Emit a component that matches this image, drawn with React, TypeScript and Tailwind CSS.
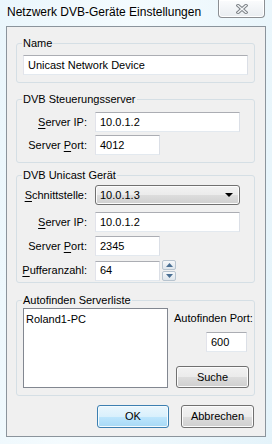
const font = "font-['Liberation_Sans',Arial,sans-serif] text-[11px] text-black";

const textbox =
  "h-[20px] border border-[#abadb3] border-b-[#e3e9ef] border-l-[#e2e3ea] border-r-[#dbdfe6] bg-white pl-[4px] flex items-center leading-none";

const gloss =
  "rounded-[3px] border border-[#707070] bg-[linear-gradient(#f2f2f2_0%,#ebebeb_50%,#dddddd_50%,#cfcfcf_100%)] shadow-[inset_0_0_0_1px_#fcfcfc]";

function Label({ pre, u, post }: { pre: string; u: string; post: string }) {
  return (
    <span className="w-[70px] shrink-0 text-right">
      {pre}
      <span className="underline underline-offset-2">{u}</span>
      {post}
    </span>
  );
}

function Row({
  pre,
  u,
  post,
  value,
  wide,
  spin,
}: {
  pre: string;
  u: string;
  post: string;
  value: string;
  wide?: boolean;
  spin?: boolean;
}) {
  return (
    <div className="flex items-center gap-[8px]">
      <Label pre={pre} u={u} post={post} />
      <div className={wide ? textbox + " w-[145px]" : textbox + " w-[65px]"}>{value}</div>
      {spin && (
        <div className="-ml-[6px] flex flex-col gap-[1px]">
          <div className="flex h-[10px] w-[14px] items-center justify-center rounded-[2px] border border-[#b8c4cf] bg-[linear-gradient(#f6f8fa,#dfe6ec)]">
            <svg width="7" height="4" viewBox="0 0 7 4">
              <path d="M0 4 L3.5 0 L7 4 Z" fill="#4a6f93" />
            </svg>
          </div>
          <div className="flex h-[10px] w-[14px] items-center justify-center rounded-[2px] border border-[#b8c4cf] bg-[linear-gradient(#f6f8fa,#dfe6ec)]">
            <svg width="7" height="4" viewBox="0 0 7 4">
              <path d="M0 0 L3.5 4 L7 0 Z" fill="#4a6f93" />
            </svg>
          </div>
        </div>
      )}
    </div>
  );
}

function Group({ title, className, children }: { title: string; className: string; children: React.ReactNode }) {
  return (
    <fieldset className={"ml-[9px] w-[239px] rounded-[3px] border border-[#d5dfe5] " + className}>
      <legend className="ml-[5px] px-[1px] leading-[14px]">{title}</legend>
      {children}
    </fieldset>
  );
}

export default function App() {
  return (
    <div className={"h-[444px] w-[272px] overflow-hidden bg-[linear-gradient(100deg,#eaf6fc,#f4fbfe_40%,#e4f3fa)] " + font}>
      {/* title bar */}
      <div className="flex h-[26px] items-start">
        <span className="ml-[7px] mt-[4px] text-[12px] leading-[16px] text-black [text-shadow:0_0_6px_#fff]">
          Netzwerk DVB-Geräte Einstellungen
        </span>
        <div className="ml-auto mr-[7px] flex h-[18px] w-[47px] items-center justify-center rounded-b-[4px] border border-t-0 border-[#8c8f93] bg-[linear-gradient(#fbfcfd,#e9edf1)] shadow-[inset_0_0_0_1px_#fff]">
          <svg width="12" height="10" viewBox="0 0 12 10">
            <path d="M2 1.5 L10 8.5 M10 1.5 L2 8.5" stroke="#7d8287" strokeWidth="3.4" strokeLinecap="square" />
            <path d="M2 1.5 L10 8.5 M10 1.5 L2 8.5" stroke="#f4f6f8" strokeWidth="1.4" strokeLinecap="square" />
          </svg>
        </div>
      </div>

      {/* client area */}
      <div className="ml-[6px] h-[411px] w-[260px] border border-[#8b949c] bg-[#f0f0f0]">
        <Group title="Name" className="mt-[9px]">
          <div className="pb-[7px] pt-[5px]">
            <div className={textbox + " ml-[6px] w-[225px]"}>Unicast Network Device</div>
          </div>
        </Group>

        <Group title="DVB Steuerungsserver" className="mt-[9px]">
          <div className="flex flex-col gap-[3px] pb-[7px] pt-[6px]">
            <Row pre="" u="S" post="erver IP:" value="10.0.1.2" wide />
            <Row pre="Server " u="P" post="ort:" value="4012" />
          </div>
        </Group>

        <Group title="DVB Unicast Gerät" className="mt-[5px]">
          <div className="flex flex-col gap-[4px] pb-[1px] pt-[3px]">
            <div className="mb-[3px] flex items-center gap-[8px]">
              <Label pre="" u="S" post="chnittstelle:" />
              <div className={gloss + " flex h-[20px] w-[145px] items-center justify-between pl-[4px] pr-[6px]"}>
                <span>10.0.1.3</span>
                <svg width="8" height="4" viewBox="0 0 8 4">
                  <path d="M0 0 L8 0 L4 4 Z" fill="#000" />
                </svg>
              </div>
            </div>
            <Row pre="" u="S" post="erver IP:" value="10.0.1.2" wide />
            <Row pre="Server " u="P" post="ort:" value="2345" />
            <Row pre="" u="P" post="ufferanzahl:" value="64" spin />
          </div>
        </Group>

        <Group title="Autofinden Serverliste" className="mt-[10px]">
          <div className="flex pb-[7px] pl-[6px] pt-[1px]">
            <div className="h-[80px] w-[145px] border border-[#828790] bg-white px-[2px] pt-[2px]">Roland1-PC</div>
            <div className="ml-[6px] flex flex-col">
              <span className="mt-[3px] whitespace-nowrap leading-[14px]">Autofinden Port:</span>
              <div className={textbox + " ml-[32px] mt-[7px] w-[41px]"}>600</div>
              <div className={gloss + " ml-[2px] mt-[14px] flex h-[22px] w-[73px] items-center justify-center"}>
                Suche
              </div>
            </div>
          </div>
        </Group>

        <div className="ml-[90px] mt-[9px] flex gap-[12px]">
          <div className="flex h-[23px] w-[72px] items-center justify-center rounded-[3px] border border-[#3c7fb1] bg-[linear-gradient(#eaf6fd_0%,#d9f0fc_50%,#bee6fd_50%,#a7d9f5_100%)] shadow-[inset_0_0_0_1px_#f4fbfe]">
            OK
          </div>
          <div className={gloss + " flex h-[23px] w-[73px] items-center justify-center"}>Abbrechen</div>
        </div>
      </div>
    </div>
  );
}
